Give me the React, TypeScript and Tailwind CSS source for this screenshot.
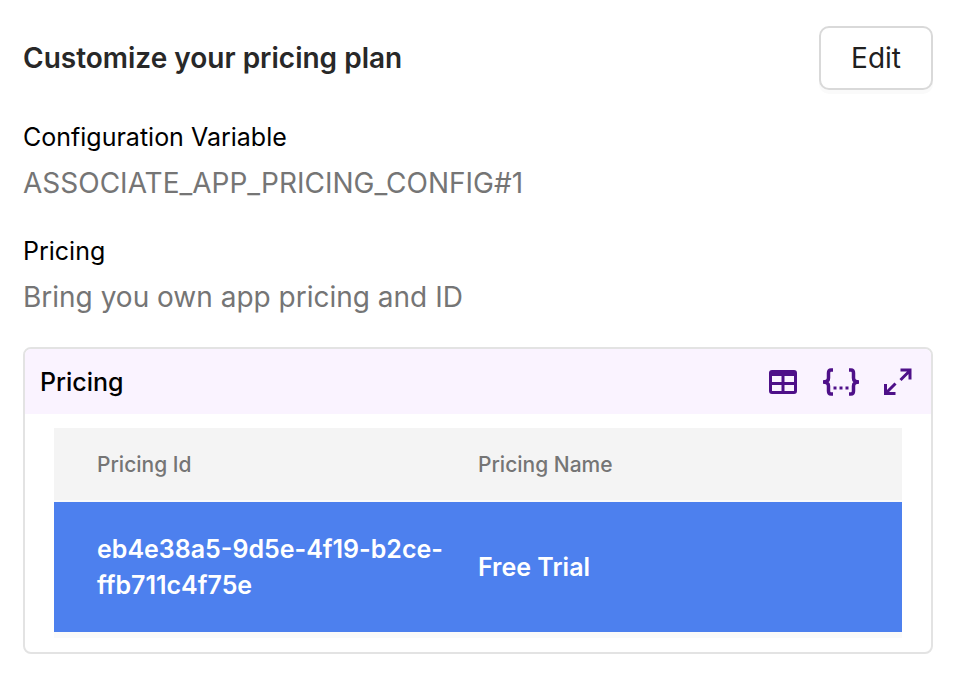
function TableIcon() {
  return (
    <svg className="h-8 w-8" viewBox="0 0 32 32" fill="currentColor" fillRule="evenodd" aria-hidden="true">
      <path d="M4 4H26Q29 4 29 7V25Q29 28 26 28H4Q1 28 1 25V7Q1 4 4 4ZM4 10V16H13.5V10ZM16.5 10V16H26V10ZM4 19V25H13.5V19ZM16.5 19V25H26V19Z" />
    </svg>
  );
}

function BracesIcon() {
  return (
    <svg className="h-8 w-10" viewBox="0 0 40 32" fill="none" stroke="currentColor" strokeWidth="3.5" aria-hidden="true">
      <path d="M12 4H10Q7.5 4 7.5 7V12Q7.5 16 2 16Q7.5 16 7.5 20V25Q7.5 28 10 28H12M28 4H30Q32.5 4 32.5 7V12Q32.5 16 38 16Q32.5 16 32.5 20V25Q32.5 28 30 28H28" />
      <path d="M12.5 22H15.5M18.5 22H21.5M24.5 22H27.5" strokeWidth="3" />
    </svg>
  );
}

function ExpandIcon() {
  return (
    <svg className="h-8 w-8" viewBox="0 0 32 32" fill="none" stroke="currentColor" strokeWidth="3" aria-hidden="true">
      <path d="M18.5 4H28V13.5M28 4.5L18.5 14M3.5 18V27.5H13.5M4 27L13.5 17.5" />
    </svg>
  );
}

export default function App() {
  return (
    <main className="min-h-screen bg-white pl-[23px] pr-[39px] pt-[26px] pb-6 font-['Inter',sans-serif] text-black">
      <header className="flex items-center justify-between">
        <h1 className="text-[28px] leading-8 font-semibold text-[#282828]">Customize your pricing plan</h1>
        <button type="button" className="h-16 rounded-[10px] border-2 border-[#d9d9d9] bg-white px-[30px] text-[28px] leading-8 text-[#202020] shadow-[0_4px_0_#fafafa]">
          Edit
        </button>
      </header>
      <dl className="mt-[27px]">
        <dt className="text-[25px] leading-10">Configuration Variable</dt>
        <dd className="mt-1 text-[28px] leading-11 text-[#757575]">ASSOCIATE_APP_PRICING_CONFIG#1</dd>
        <dt className="mt-[26px] text-[25px] leading-10">Pricing</dt>
        <dd className="mt-1 text-[28px] leading-11 text-[#757575]">Bring you own app pricing and ID</dd>
      </dl>
      <section className="mt-7 overflow-hidden rounded-lg border-2 border-[#e3e3e3]">
        <header className="flex h-[65px] items-center justify-between bg-[#faf3ff] pl-[15px] pr-[17px]">
          <h2 className="text-[25px] leading-8 font-medium">Pricing</h2>
          <div className="flex items-center gap-[21px] text-[#4e1089]">
            <button type="button" aria-label="Table view"><TableIcon /></button>
            <button type="button" aria-label="JSON view"><BracesIcon /></button>
            <button type="button" aria-label="Expand"><ExpandIcon /></button>
          </div>
        </header>
        <div className="px-[29px] pt-[14px] pb-[14px]">
          <table className="w-full table-fixed border-separate border-spacing-0 text-left">
            <thead className="text-[21px] leading-8 text-[#757575]">
              <tr className="h-[74px] bg-[#f4f4f4]">
                <th className="w-[402px] border-b-2 border-[#fafafa] pt-0.5 pl-[43px] font-medium">Pricing Id</th>
                <th className="border-b-2 border-[#fafafa] pt-0.5 pl-[22px] font-medium">Pricing Name</th>
              </tr>
            </thead>
            <tbody className="text-[25px] leading-9 text-white">
              <tr className="h-[136px] bg-[#4d80ee]">
                <td className="border-b-6 border-[#fafafa] pl-[43px] font-semibold">eb4e38a5-9d5e-4f19-b2ce-ffb711c4f75e</td>
                <td className="border-b-6 border-[#fafafa] pl-[22px] font-semibold">Free Trial</td>
              </tr>
            </tbody>
          </table>
        </div>
      </section>
    </main>
  );
}
